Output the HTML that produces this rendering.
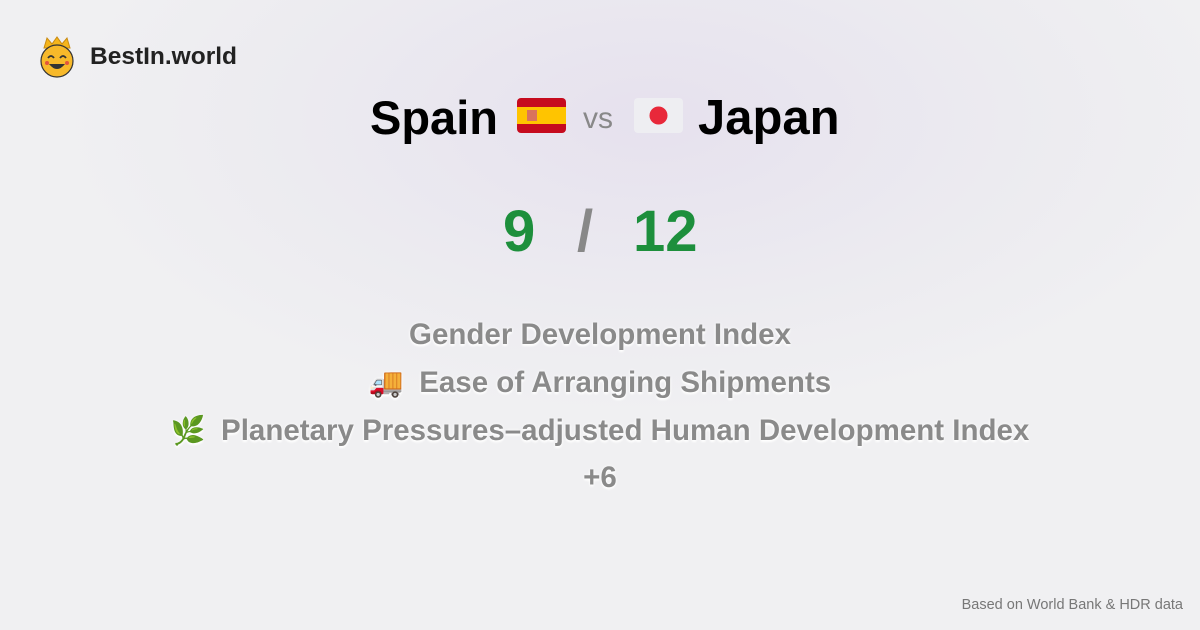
<!DOCTYPE html>
<html><head><meta charset="utf-8"><style>
html,body{margin:0;padding:0}
body{width:1200px;height:630px;overflow:hidden;position:relative;font-family:"Liberation Sans",sans-serif;
background:radial-gradient(ellipse 600px 300px at 650px 120px,#e6e1ee 0%,#ecebf0 60%,#f0f0f2 100%);}
.abs{position:absolute}
.logo{left:90px;top:43px;font-size:24.5px;font-weight:bold;color:#222}
.title{top:88px;left:0;width:1200px;height:60px}
.t{position:absolute;top:0;font-size:47px;font-weight:bold;color:#000;line-height:60px}
.vs{position:absolute;left:583px;top:6px;font-size:30px;color:#888;line-height:50px}
.num{position:absolute;top:203px;font-size:58px;font-weight:bold;color:#1d8f3c;line-height:58px}
.li{position:absolute;left:0;width:1200px;text-align:center;font-size:29.5px;font-weight:bold;color:#8a8a8a;text-shadow:0 0 3px #fff,0 2px 2px #fff;line-height:34px}
.em{font-size:28px;display:inline-block;width:34px;text-align:center}
.foot{right:17px;top:597px;font-size:14.5px;color:#777}
</style></head><body>
<svg class="abs" style="left:38px;top:36px" width="38" height="42" viewBox="0 0 38 42">
<path d="M6 12 L9 2 L14 8 L19 1 L24 8 L29 2 L32 12 Z" fill="#f5b51c" stroke="#c98a10" stroke-width="1"/>
<circle cx="19" cy="25" r="16" fill="#f7b92a" stroke="#333" stroke-width="1.2"/>
<path d="M10 22 q3 -4 6 0 M22 22 q3 -4 6 0" stroke="#333" stroke-width="1.8" fill="none"/>
<path d="M11 28 q8 10 16 0 z" fill="#333"/>
<circle cx="9" cy="27" r="2" fill="#e2553d"/><circle cx="29" cy="27" r="2" fill="#e2553d"/>
</svg>
<div class="abs logo">BestIn.world</div>
<div class="abs title">
<div class="t" style="left:370px">Spain</div>
<svg class="abs" style="left:517px;top:10px" width="49" height="35" viewBox="0 0 49 35"><rect width="49" height="35" rx="4" fill="#c60b1e"/><rect y="9" width="49" height="17" fill="#ffc400"/><rect x="10" y="12" width="10" height="11" fill="#d9745c"/></svg>
<div class="vs">vs</div>
<svg class="abs" style="left:634px;top:10px" width="49" height="35" viewBox="0 0 49 35"><rect width="49" height="35" rx="4" fill="#eeeef2"/><circle cx="24.5" cy="17.5" r="9" fill="#e8283a"/></svg>
<div class="t" style="left:698px;font-size:49px">Japan</div>
</div>
<div class="num" style="left:503px">9</div>
<div class="num" style="left:577px;color:#888">/</div>
<div class="num" style="left:633px">12</div>
<div class="li" style="top:318px">Gender Development Index</div>
<div class="li" style="top:366px"><span class="em">🚚</span>&nbsp; Ease of Arranging Shipments</div>
<div class="li" style="top:414px"><span class="em">🌿</span>&nbsp; Planetary Pressures–adjusted Human Development Index</div>
<div class="li" style="top:461px">+6</div>
<div class="abs foot">Based on World Bank &amp; HDR data</div>
</body></html>
